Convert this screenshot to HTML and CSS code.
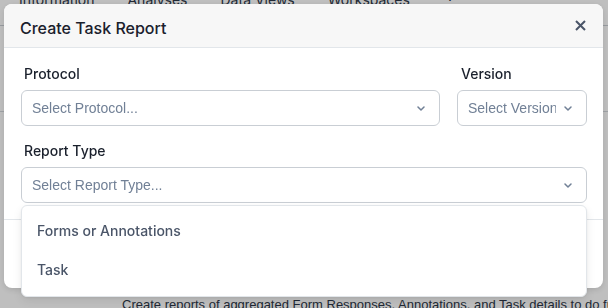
FILE: index.html
```html
<!DOCTYPE html>
<html lang="en">
<head>
<meta charset="utf-8">
<title>Create Task Report</title>
<link rel="stylesheet" href="styles.css">
</head>
<body>
  <div class="page">
    <nav class="tabs">
      <span class="tab">Information</span>
      <span class="tab">Analyses</span>
      <span class="tab">Data Views</span>
      <span class="tab">Workspaces</span>
      <span class="tab">⋮</span>
    </nav>
    <div class="subbar"></div>
    <p class="desc">Create reports of aggregated Form Responses, Annotations, and Task details to do further analysis.</p>
  </div>

  <div class="overlay">
    <div class="modal">
      <header class="modal-header">
        <h2 class="modal-title">Create Task Report</h2>
        <svg class="close" viewBox="0 0 11 11" width="11" height="11" aria-label="Close">
          <path d="M1 1 L10 10 M10 1 L1 10" stroke="#4a5568" stroke-width="2" fill="none"/>
        </svg>
      </header>
      <div class="modal-body">
        <div class="row">
          <div class="field grow">
            <label class="label">Protocol</label>
            <div class="select">
              <span class="value">Select Protocol...</span>
              <svg class="chev" viewBox="0 0 8 5" width="8" height="5"><path d="M1 1 L4 4 L7 1" stroke="#718096" stroke-width="1.5" fill="none" stroke-linecap="round" stroke-linejoin="round"/></svg>
            </div>
          </div>
          <div class="field version">
            <label class="label">Version</label>
            <div class="select">
              <span class="value">Select Version...</span>
              <svg class="chev" viewBox="0 0 8 5" width="8" height="5"><path d="M1 1 L4 4 L7 1" stroke="#718096" stroke-width="1.5" fill="none" stroke-linecap="round" stroke-linejoin="round"/></svg>
            </div>
          </div>
        </div>
        <div class="field">
          <label class="label">Report Type</label>
          <div class="select-wrap">
            <div class="select">
              <span class="value">Select Report Type...</span>
              <svg class="chev" viewBox="0 0 8 5" width="8" height="5"><path d="M1 1 L4 4 L7 1" stroke="#718096" stroke-width="1.5" fill="none" stroke-linecap="round" stroke-linejoin="round"/></svg>
            </div>
            <ul class="menu">
              <li class="menu-item">Forms or Annotations</li>
              <li class="menu-item">Task</li>
            </ul>
          </div>
        </div>
      </div>
      <footer class="modal-footer"></footer>
    </div>
  </div>
</body>
</html>
```
FILE: styles.css
```css
* { box-sizing: border-box; }

html, body {
  margin: 0;
  width: 608px;
  height: 308px;
  overflow: hidden;
  background: #ffffff;
  font-family: Inter, "Liberation Sans", sans-serif;
}

.page {
  height: 308px;
}

.tabs {
  display: flex;
  gap: 33px;
  padding-left: 19px;
  height: 26px;
  border-bottom: 1px solid #cbd0d6;
  font: 14px/14px Inter, "Liberation Sans", sans-serif;
  color: #2d3748;
}

.tab {
  margin-top: -7px;
}

.subbar {
  height: 86px;
  border-bottom: 1px solid #d5d9de;
}

.desc {
  margin: 0;
  padding: 185px 0 0 122px;
  white-space: nowrap;
  font: 13px/16px "Liberation Sans", sans-serif;
  color: #2d3748;
}

.overlay {
  position: fixed;
  inset: 0;
  background: rgba(0, 0, 0, 0.25);
  padding: 4px 5px 0 4px;
}

.modal {
  width: 599px;
  height: 284px;
  background: #ffffff;
  border-radius: 8px;
  box-shadow: 0 2px 6px rgba(0, 0, 0, 0.12);
  display: flex;
  flex-direction: column;
}

.modal-header {
  display: flex;
  align-items: flex-start;
  justify-content: space-between;
  padding: 12px 17px 7px 16px;
  background: #f7f7f7;
  border-bottom: 1px solid #e2e6ea;
  border-radius: 8px 8px 0 0;
}

.modal-title {
  margin: 0;
  font-size: 16px;
  line-height: 24px;
  font-weight: 500;
  color: #1a202c;
}

.close {
  margin-top: 4px;
  flex: none;
}

.modal-body {
  display: flex;
  flex-direction: column;
  gap: 15px;
  padding: 16px 16px 16px 17px;
  border-bottom: 1px solid #e2e6ea;
}

.row {
  display: flex;
  gap: 17px;
}

.grow {
  flex: 1;
  min-width: 0;
}

.version {
  width: 130px;
  flex: none;
}

.label {
  display: block;
  padding-left: 3px;
  margin-bottom: 6px;
  font-size: 14px;
  line-height: 20px;
  font-weight: 500;
  color: #1a202c;
}

.version .label {
  padding-left: 4px;
}

.select-wrap {
  position: relative;
}

.select {
  height: 36px;
  display: flex;
  align-items: center;
  gap: 8px;
  padding: 0 14px 0 10px;
  background: #ffffff;
  border: 1px solid #c9ced4;
  border-radius: 6px;
  font: 14px "Liberation Sans", sans-serif;
  color: #718096;
}

.value {
  flex: 1;
  min-width: 0;
  overflow: hidden;
  white-space: nowrap;
}

.chev {
  flex: none;
}

.menu {
  position: absolute;
  left: 0;
  right: 0;
  top: calc(100% + 2px);
  margin: 0;
  padding: 5px 0 7px;
  list-style: none;
  background: #ffffff;
  border: 1px solid #e2e6ea;
  border-radius: 6px;
  box-shadow: 0 4px 10px rgba(0, 0, 0, 0.08), 0 1px 3px rgba(0, 0, 0, 0.06);
  z-index: 2;
}

.menu-item {
  padding: 0 15px;
  line-height: 39px;
  font-size: 14px;
  font-weight: 500;
  color: #4a5568;
}

.modal-footer {
  flex: 1;
}
```
